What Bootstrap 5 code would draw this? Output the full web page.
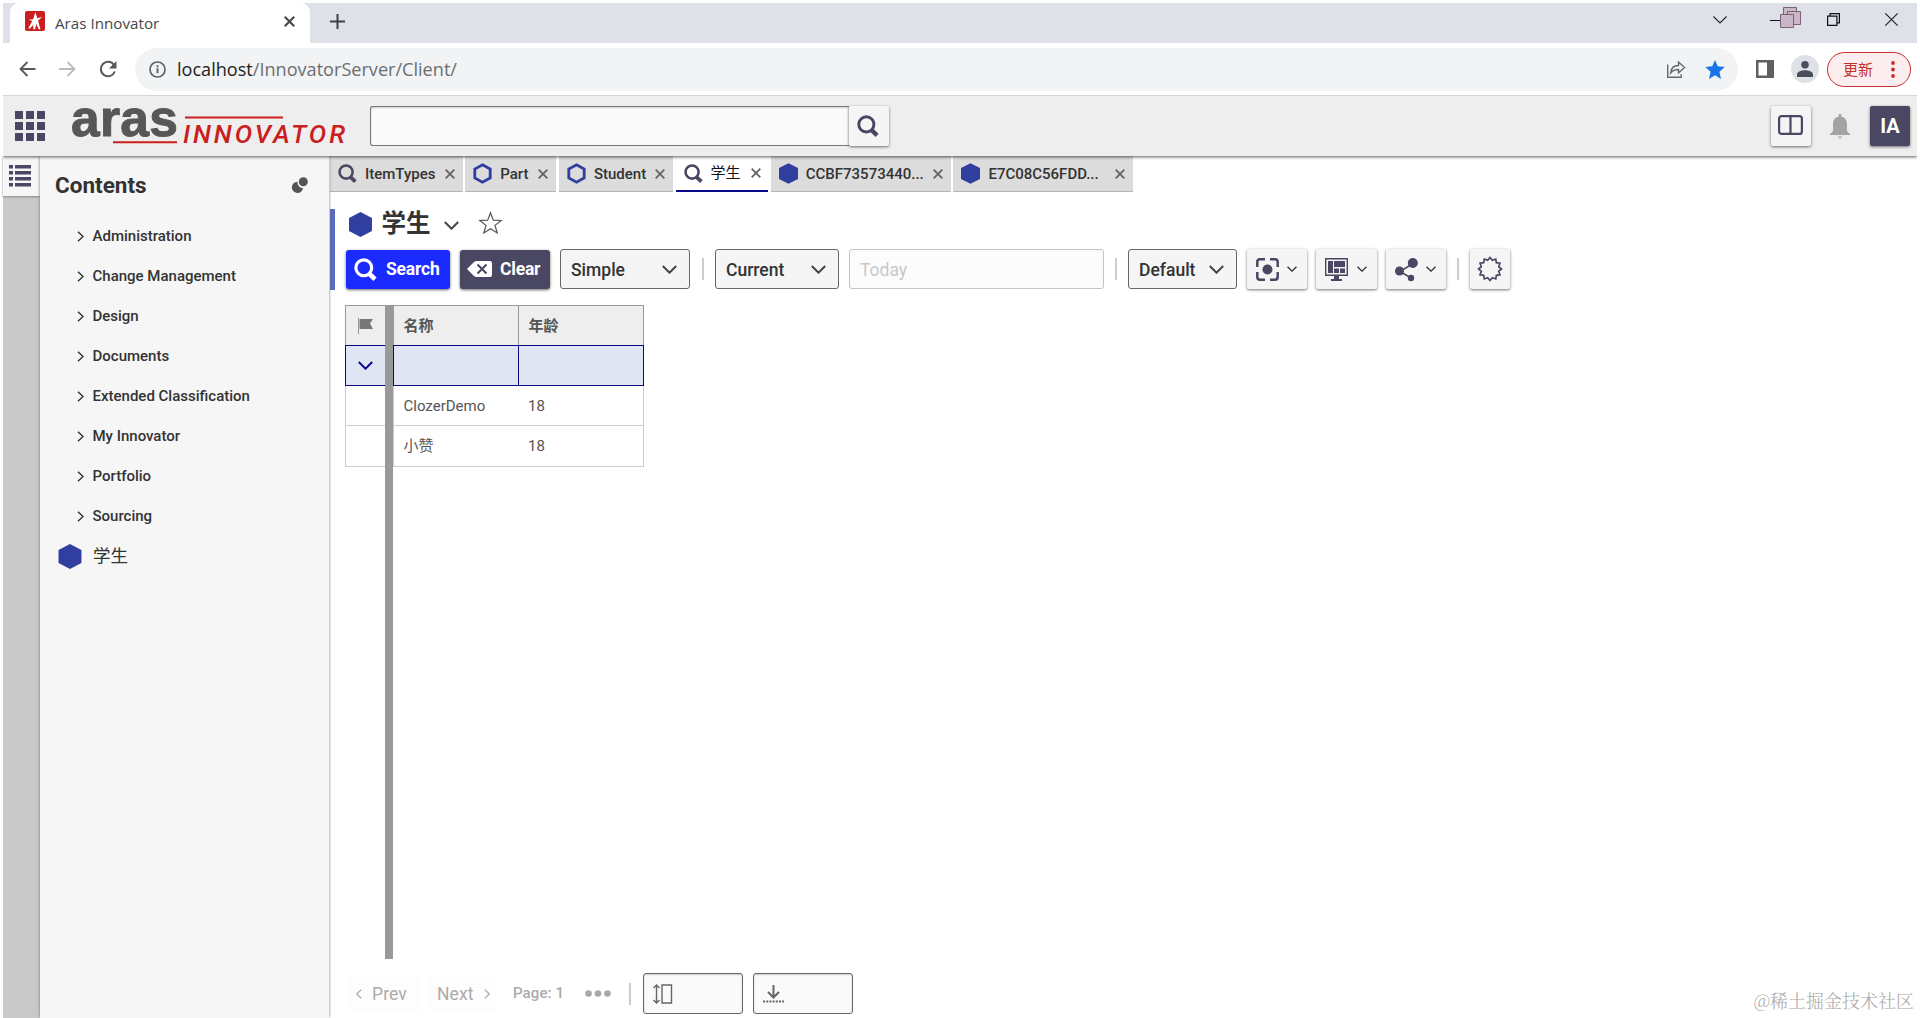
<!DOCTYPE html>
<html lang="en">
<head>
<meta charset="utf-8">
<title>Aras Innovator</title>
<link rel="stylesheet" href="https://cdn.jsdelivr.net/npm/bootstrap@5.3.0/dist/css/bootstrap.min.css">
<script src="https://cdn.jsdelivr.net/npm/bootstrap@5.3.0/dist/js/bootstrap.bundle.min.js"></script>
<style>
:root{--ink:#4a4763;--hex:#303f9f}
body{font-family:Roboto,"Noto Sans CJK SC",sans-serif;font-size:15px;line-height:20px;color:#333;background:#fff;height:1018px;overflow:hidden}
svg{display:block;flex:none;overflow:visible}
.shell{padding:3px 3px 0;height:1018px}
.ui{font-family:"Open Sans","Noto Sans CJK SC",sans-serif}
.tabstrip{height:40px;background:#dee1e8;padding-left:7px}
.browser-tab{width:300px;height:40px;background:#fff;border-radius:9px 9px 0 0;padding:0 15px 4px 15px}
.browser-tab .cap{font-size:15.2px;color:#45474b;margin-left:10px;padding-top:4px}
.plus{margin:0 0 4px 20px}
.win{padding:0 19px 7px 0}
.addr{height:53px;border-bottom:1px solid #d5d6d6;padding:0 6px 0 16px}
.omni{height:43px;margin:5px 0 0 18px;border-radius:22px;background:#f1f3f4;padding:0 13px 0 14px}
.omni .url{font-size:18.1px;color:#6b6e72;margin-left:11px;padding-bottom:2px}
.omni b{font-weight:400;color:#222}
.avatar{width:28px;height:28px;background:#dee1e6}
.update{width:84px;height:35px;border:1.5px solid #c5302c;background:#fceeee;color:#c5302c;padding:0 15px;font-size:15px}
.apphead{height:60px;background:#eee;box-shadow:0 1px 3px rgba(0,0,0,.65);position:relative;z-index:2;padding:0 7px 0 12px;clip-path:inset(0 0 -6px 0)}
.find{width:479px;height:40px;border:1px solid #777;border-right:0;border-radius:3px 0 0 3px;background:#fafafa;box-shadow:inset 0 1px 2px #ccc}
.raised{background:#f5f5f5;border-radius:2px;box-shadow:0 1px 3px rgba(0,0,0,.55)}
.sq{width:40px;height:40px}
.user{background:var(--ink);color:#fff;font-weight:700;font-size:20px}
.rail{width:37px;background:#c9c9c9}
.rail div{height:40px;background:#f6f6f6;box-shadow:0 1px 2px #888;padding-left:6px}
.toc{width:289px;background:#f6f6f6;box-shadow:0 0 3px #777;position:relative;z-index:1;padding:13px 21px 0 15px}
.toc h1{font-size:22.5px;line-height:32px;font-weight:700;margin:0}
.toc ul{margin-top:15px}
.toc li{height:40px;font-weight:500;padding-left:22px}
.toc li svg{margin-right:8.5px}
.toc .own{padding-left:3px;font-weight:400;font-size:17.5px}
.toc .own svg{margin-right:11px}
.doc-tab{height:36px;background:#dcdcdc;border-bottom:1px solid #b5b5b5;margin-right:2.7px;padding:0 8px;font-weight:500}
.doc-tab.on{background:#fff;border-bottom:2px solid #0a0a8a;color:#111;font-weight:400}
.doc-tab .x{margin-left:auto}
.zone{height:81px;margin-top:17px;border-left:5px solid #5c6bc0;padding-left:11px}
.zone h2{font-size:24.5px;line-height:30px;font-weight:700;margin:0;color:#333}
.tools{margin-top:10px;height:40px;font-size:17.5px;font-weight:500}
.act{height:39px;border-radius:3px;color:#fff;font-weight:700;font-size:17.5px;letter-spacing:-.2px;box-shadow:0 1px 3px rgba(0,0,0,.6)}
.pick{height:40px;border:1px solid #666;border-radius:3px;background:#f5f5f5;color:#333;padding:1px 12px 0 10px}
.vr2{width:2px;height:22px;background:#ccc}
.today{width:255px;height:40px;border:1px solid #c4c4c4;border-radius:3px;background:#fcfcfc;color:#c8c8c8;padding:10px 10px 9px;font-weight:400}
.gridzone{height:654px;margin:15px 0 0 15px}
.splitter{width:8px;background:#999}
.cell{height:40.3px;border:1px solid #ccc;border-top:0;padding-left:9.5px;color:#555}
.cell.hd{height:40px;background:#eee;border:1px solid #999;border-bottom:0;font-weight:700}
.cell.cr{height:41px;background:#e0e5f3;border:1px solid #0a0a80}
.c0{width:41px;padding-left:12px!important}.c1{width:126px}.c2{width:126px;margin-left:-1px}
.flat1{border-right:0!important}.flat2{border-left:0!important}
.pager{margin:14px 0 0 18px;height:41px;color:#ababab;font-size:17.5px;letter-spacing:.1px}
.pg{height:35px;background:#fdfdfd}
.box{width:100px;height:41px;border:1px solid #666;border-radius:3px;background:#fafafa;box-shadow:inset 0 1px 2px #ccc;padding-left:9px}
.wmark{right:6px;bottom:6px;font-size:18px;line-height:24px;font-family:"Noto Serif CJK SC","Noto Sans CJK SC",serif;font-weight:300;color:#a9a9a9}
</style>
</head>
<body>
<svg width="0" height="0" class="position-absolute"><defs>
<symbol id="mag" viewBox="0 0 20 20"><circle cx="8.500" cy="8.500" r="6.900" fill="none" stroke="currentColor" stroke-width="2.700"/><path d="M13 13.500l5.300 5" stroke="currentColor" stroke-width="4"/></symbol>
<symbol id="hexf" viewBox="0 0 22 24"><path d="M11 0l11 5.700v12.600L11 24 0 18.300V5.700z" fill="#303f9f"/></symbol>
<symbol id="hexo" viewBox="0 0 20 22"><path d="M10 1.900l8.100 4.400v9.400L10 20.100l-8.100-4.400V6.300z" fill="none" stroke="#303f9f" stroke-width="3"/></symbol>
<symbol id="cross" viewBox="0 0 10 10"><path d="M.7.7l8.600 8.600M9.300.7L.7 9.300" stroke="currentColor" stroke-width="1.900"/></symbol>
<symbol id="down" viewBox="0 0 15 9"><path d="M.8 1l6.700 6.700L14.200 1" fill="none" stroke="currentColor" stroke-width="2"/></symbol>
<symbol id="right" viewBox="0 0 6 10"><path d="M.7.6L5.300 5 .7 9.400" fill="none" stroke="currentColor" stroke-width="1.300"/></symbol>
</defs></svg>
<div class="shell d-flex flex-column">
  <div class="tabstrip ui d-flex align-items-center">
    <div class="browser-tab d-flex align-items-center">
      <svg width="20" height="20" viewBox="0 0 20 20"><rect width="20" height="20" rx="2" fill="#c9201f"/><path d="M10.300 1.300l2.100 5.900 4.700-1.200-4 3.600 2.300 8.700h-1.700L11.300 13l-1.200 5.300H8.300L8.200 14l-3.400 3.600H3.200L7.300 10 3.500 8.800l4.700-.6z" fill="#fff"/></svg>
      <span class="cap">Aras Innovator</span>
      <svg class="ms-auto" width="11" height="11" color="#44474b"><use href="#cross"/></svg>
    </div>
    <svg class="plus" width="15" height="15" viewBox="0 0 15 15" stroke="#3c4043" stroke-width="2"><path d="M7.500 0v15M0 7.500h15"/></svg>
    <div class="win d-flex ms-auto align-items-center">
      <svg width="14" height="8" viewBox="0 0 14 8" fill="none" stroke="#222" stroke-width="1.100"><path d="M.5.5L7 7l6.500-6.500"/></svg>
      <svg width="32" height="22" viewBox="0 0 32 22" style="margin:-6px 25px 0 43px"><path d="M0 14.500h12" stroke="#111" /><g fill="#cbb6c9" stroke="#7d6275"><path d="M13.500 1.500h13v13h-13z"/><path d="M17.500 5.500h13v13h-13z"/><path d="M10.500 8.500h13v13h-13z"/></g></svg>
      <svg width="13" height="13" viewBox="0 0 13 13" fill="none" stroke="#111" stroke-width="1.200"><path d="M.6 3.100h9.300v9.300H.6zM3.100 3V.6h9.300v9.300H10"/></svg>
      <svg width="13" height="13" viewBox="0 0 13 13" stroke="#222" stroke-width="1.200" style="margin-left:45px"><path d="M.3.3l12.400 12.400M12.700.3L.3 12.700"/></svg>
    </div>
  </div>
  <div class="addr ui d-flex align-items-center">
    <svg width="17" height="16" viewBox="0 0 17 16" fill="none" stroke="#55585c" stroke-width="1.800"><path d="M16.500 8H1.500M8.500 1l-7 7 7 7"/></svg>
    <svg width="17" height="16" viewBox="0 0 17 16" fill="none" stroke="#b9bbbd" stroke-width="1.800" style="margin-left:23px"><path d="M0 8h15M8.500 1l7 7-7 7"/></svg>
    <svg width="18" height="17" viewBox="0 0 18 17" style="margin-left:23px"><path d="M15 4a7.200 7.200 0 1 0 .8 6.500" fill="none" stroke="#55585c" stroke-width="2"/><path d="M17.500 0v7.500H10z" fill="#55585c"/></svg>
    <div class="omni d-flex flex-grow-1 align-items-center align-self-start">
      <svg width="17" height="17" viewBox="0 0 17 17"><circle cx="8.500" cy="8.500" r="7.500" fill="none" stroke="#5f6368" stroke-width="1.700"/><path d="M8.500 7.300v5M8.500 4.300v2" stroke="#5f6368" stroke-width="1.900"/></svg>
      <span class="url"><b>localhost</b>/InnovatorServer/Client/</span>
      <svg class="ms-auto" width="18" height="17" viewBox="0 0 18 17" fill="none" stroke="#66696d" stroke-width="1.400"><path d="M.7 3.500v12.800h13.500v-3M3.600 12C4 7 7 4.500 11.500 4.500V1l6 5.500-6 5.500V8.500C8 8.500 5.500 9.500 3.600 12z"/></svg>
      <svg width="20" height="19" viewBox="0 0 20 19" style="margin-left:20px"><path d="M10 0l2.700 6.300 7 .8-5.300 4.600L16 19l-6-3.700L4 19l1.600-7.300L.3 7.100l7-.8z" fill="#1a73e8"/></svg>
    </div>
    <svg width="18" height="18" viewBox="0 0 18 18" style="margin-left:18px"><path d="M0 0h18v18H0zM2.500 2.500v13h8.500v-13z" fill="#5f6062" fill-rule="evenodd"/></svg>
    <div class="avatar rounded-circle d-flex justify-content-center align-items-center" style="margin-left:17px"><svg width="16" height="16" viewBox="0 0 16 16" fill="#4a4e5c"><circle cx="8" cy="3.800" r="3.800"/><path d="M0 16v-2.500C0 10.500 5 9.300 8 9.300s8 1.200 8 4.200V16z"/></svg></div>
    <div class="update rounded-pill d-flex align-items-center justify-content-between" style="margin-left:8px"><span>更新</span><svg width="4" height="17" viewBox="0 0 4 17" fill="#c5302c"><circle cx="2" cy="2" r="1.900"/><circle cx="2" cy="8.500" r="1.900"/><circle cx="2" cy="15" r="1.900"/></svg></div>
  </div>
  <header class="apphead d-flex align-items-center">
    <svg width="30" height="30" viewBox="0 0 30 30" fill="#4a4763"><path d="M0 0h8v8H0zM11 0h8v8h-8zM22 0h8v8h-8zM0 11h8v8H0zM11 11h8v8h-8zM22 11h8v8h-8zM0 22h8v8H0zM11 22h8v8h-8zM22 22h8v8h-8z"/></svg>
    <svg width="325" height="60" viewBox="45 0 325 60">
      <text x="71" y="40" font-family="Liberation Sans" font-weight="700" font-size="51.500" fill="#575757" textLength="107" stroke="#575757" stroke-width="1">aras</text>
      <path d="M113 46.200h64M185 21.500h98" stroke="#c9201f" stroke-width="2"/>
      <text x="183" y="46.700" font-family="Roboto" font-style="italic" font-weight="500" font-size="26" fill="#c9201f" textLength="162">INNOVATOR</text>
    </svg>
    <div class="find"></div>
    <div class="raised sq d-flex align-items-center justify-content-center" style="color:#4a4763"><svg width="22" height="22" style="margin:0 3px 1px 0"><use href="#mag"/></svg></div>
    <div class="raised sq ms-auto d-flex align-items-center justify-content-center"><svg width="25" height="20" viewBox="0 0 25 20" fill="none" stroke="#4a4763" stroke-width="2.200" style="margin:-3px 2px 0 0"><rect x="1.100" y="1.100" width="22.800" height="17.800" rx="2.500"/><path d="M12.500 1v18"/></svg></div>
    <svg width="20" height="25" viewBox="0 0 20 25" fill="#a3a3a3" style="margin:0 20px 0 19px"><path d="M8.800 2.500V0h2.400v2.500c4 .8 5.800 4 5.800 7.500v7l3 3.200V21H0v-.8L3 17v-7c0-3.500 1.800-6.700 5.800-7.500zM7.800 22.500h4.400L10 24.800z"/></svg>
    <div class="raised sq user d-flex align-items-center justify-content-center">IA</div>
  </header>
  <div class="d-flex flex-grow-1">
    <nav class="rail"><div class="d-flex align-items-center"><svg width="22" height="22" viewBox="0 0 22 22" fill="#4a4763"><path d="M0 0h4v3.500H0zM6 0h16v3.500H6zM0 6h4v3.500H0zM6 6h16v3.500H6zM0 12h4v3.500H0zM6 12h16v3.500H6zM0 18h4v3.500H0zM6 18h16v3.500H6z"/></svg></div></nav>
    <aside class="toc">
      <div class="d-flex align-items-center justify-content-between"><h1>Contents</h1><svg width="16" height="16" viewBox="0 0 16 16" fill="#555"><path d="M5.500 4.800A5.600 5.600 0 1 0 11 11 5.500 5.500 0 0 1 5.500 4.800z"/><circle cx="11.300" cy="4.700" r="4.500"/></svg></div>
      <ul class="list-unstyled mb-0">
        <li class="d-flex align-items-center"><svg width="7" height="11"><use href="#right"/></svg>Administration</li>
        <li class="d-flex align-items-center"><svg width="7" height="11"><use href="#right"/></svg>Change Management</li>
        <li class="d-flex align-items-center"><svg width="7" height="11"><use href="#right"/></svg>Design</li>
        <li class="d-flex align-items-center"><svg width="7" height="11"><use href="#right"/></svg>Documents</li>
        <li class="d-flex align-items-center"><svg width="7" height="11"><use href="#right"/></svg>Extended Classification</li>
        <li class="d-flex align-items-center"><svg width="7" height="11"><use href="#right"/></svg>My Innovator</li>
        <li class="d-flex align-items-center"><svg width="7" height="11"><use href="#right"/></svg>Portfolio</li>
        <li class="d-flex align-items-center"><svg width="7" height="11"><use href="#right"/></svg>Sourcing</li>
        <li class="own d-flex align-items-center"><svg width="24" height="25"><use href="#hexf"/></svg>学生</li>
      </ul>
    </aside>
    <main class="flex-grow-1 d-flex flex-column ms-0" style="padding-left:1px">
      <div class="d-flex">
        <div class="doc-tab d-flex align-items-center" style="width:132.500px"><svg width="19" height="19" color="#4a4763"><use href="#mag"/></svg><span style="margin-left:8px">ItemTypes</span><svg class="x" width="10" height="10" color="#666"><use href="#cross"/></svg></div>
        <div class="doc-tab d-flex align-items-center" style="width:91px"><svg width="19" height="23"><use href="#hexo"/></svg><span style="margin-left:8px">Part</span><svg class="x" width="10" height="10" color="#666"><use href="#cross"/></svg></div>
        <div class="doc-tab d-flex align-items-center" style="width:114px"><svg width="19" height="23"><use href="#hexo"/></svg><span style="margin-left:8px">Student</span><svg class="x" width="10" height="10" color="#666"><use href="#cross"/></svg></div>
        <div class="doc-tab on d-flex align-items-center" style="width:92.500px"><svg width="19" height="19" color="#4a4763"><use href="#mag"/></svg><span style="margin-left:8px">学生</span><svg class="x" width="10" height="10" color="#666" style="margin-right:-1px"><use href="#cross"/></svg></div>
        <div class="doc-tab d-flex align-items-center" style="width:180px"><svg width="19" height="21"><use href="#hexf"/></svg><span style="margin-left:8px">CCBF73573440...</span><svg class="x" width="10" height="10" color="#666"><use href="#cross"/></svg></div>
        <div class="doc-tab d-flex align-items-center" style="width:180px"><svg width="19" height="21"><use href="#hexf"/></svg><span style="margin-left:8px">E7C08C56FDD...</span><svg class="x" width="10" height="10" color="#666"><use href="#cross"/></svg></div>
      </div>
      <section class="zone">
        <div class="d-flex align-items-center"><svg width="23" height="25" style="margin-left:3px"><use href="#hexf"/></svg><h2 style="margin-left:9.500px">学生</h2><svg width="15" height="9" color="#444" style="margin:2px 0 0 13px"><use href="#down"/></svg>
          <svg width="23" height="22" viewBox="0 0 23 22" style="margin:-2px 0 0 20.500px"><path d="M11.500.7l2.800 7.400 7.900.4-6.200 4.900 2.200 7.600-6.700-4.300L4.800 21 7 13.400.8 8.500l7.900-.4z" fill="none" stroke="#555" stroke-width="1.200"/></svg></div>
        <div class="tools d-flex align-items-center">
          <div class="act d-flex align-items-center" style="width:104px;background:#1b2bff;padding-left:8px"><svg width="23" height="23" style="margin-right:9px"><use href="#mag"/></svg>Search</div>
          <div class="act d-flex align-items-center" style="width:90px;background:#4a4763;margin-left:10px;padding-left:7px"><svg width="25" height="16" viewBox="0 0 25 16" style="margin-right:8px"><path d="M0 8l7-7q1-1 2.500-1H23q2 0 2 2v12q0 2-2 2H9.500Q8 16 7 15z" fill="#fff"/><path d="M10.500 3.500l9 9m0-9l-9 9" stroke="#4a4763" stroke-width="2"/></svg>Clear</div>
          <div class="pick d-flex align-items-center justify-content-between" style="width:130px;margin-left:10px">Simple<svg width="15" height="9" color="#444"><use href="#down"/></svg></div>
          <div class="vr2" style="margin:0 11px 0 12px"></div>
          <div class="pick d-flex align-items-center justify-content-between" style="width:124px">Current<svg width="15" height="9" color="#444"><use href="#down"/></svg></div>
          <div class="today d-flex align-items-center" style="margin-left:10px">Today</div>
          <div class="vr2" style="margin:0 11px"></div>
          <div class="pick d-flex align-items-center justify-content-between" style="width:109px">Default<svg width="15" height="9" color="#444"><use href="#down"/></svg></div>
          <div class="raised sq d-flex align-items-center justify-content-between" style="width:60px;margin-left:10px;padding:0 10.500px 0 8.500px"><svg width="23" height="23" viewBox="0 0 23 23" fill="none" stroke="#4a4763" stroke-width="2.500"><path d="M1.300 9V4q0-2.700 2.700-2.700h5M14 1.300h5q2.700 0 2.700 2.700v5M21.700 14v5q0 2.700-2.700 2.700h-5M9 21.700H4q-2.700 0-2.700-2.700v-5"/><circle cx="11.500" cy="11.500" r="5" fill="#4a4763" stroke="none"/></svg><svg width="10" height="6" color="#333"><use href="#down"/></svg></div>
          <div class="raised sq d-flex align-items-center justify-content-between" style="width:61px;margin-left:9px;padding:0 10.500px 0 8.500px"><svg width="23" height="23" viewBox="0 0 23 23"><path d="M.7.7h21.600v16.600H.7z" fill="#f5f5f5" stroke="#4a4763" stroke-width="1.400"/><path d="M3 3h5v12H3zM9 3h11v6H9zM9 10.500h5V15H9zM15 10.500h5V15h-5zM9 18h5v3h3v2H6v-2h3z" fill="#4a4763"/></svg><svg width="10" height="6" color="#333"><use href="#down"/></svg></div>
          <div class="raised sq d-flex align-items-center justify-content-between" style="width:60px;margin-left:9px;padding:0 10.500px 0 8.500px"><svg width="23" height="23" viewBox="0 0 23 23" fill="#4a4763"><path d="M16 20L5 13.500 18 5.500" fill="none" stroke="#4a4763" stroke-width="1.500"/><circle cx="4.500" cy="13" r="4.500"/><circle cx="17.800" cy="5" r="5"/><circle cx="16" cy="20" r="3.200"/></svg><svg width="10" height="6" color="#333"><use href="#down"/></svg></div>
          <div class="vr2" style="margin:0 11px"></div>
          <div class="raised sq d-flex align-items-center justify-content-center"><svg width="24" height="24" viewBox="-12 -12 24 24" style="margin-right:1px"><path id="burst" fill="none" stroke="#4a4763" stroke-width="1.700"/></svg></div>
        </div>
      </section>
      <section class="gridzone d-flex">
        <div class="c0w">
          <div class="cell hd c0 d-flex align-items-center"><svg width="15" height="16" viewBox="0 0 15 16"><path d="M.5 0v16" stroke="#999"/><path d="M1.500 1H15l-3 4.500 3 5.500H1.500z" fill="#777"/></svg></div>
          <div class="cell cr c0 d-flex align-items-center"><svg width="15" height="9" color="#0a0a9a"><use href="#down"/></svg></div>
          <div class="cell c0 flat1"></div><div class="cell c0 flat1"></div>
        </div>
        <div class="splitter" style="margin-left:-1px"></div>
        <div>
          <div class="d-flex"><div class="cell hd c1 d-flex align-items-center">名称</div><div class="cell hd c2 d-flex align-items-center">年龄</div></div>
          <div class="d-flex"><div class="cell cr c1"></div><div class="cell cr c2"></div></div>
          <div class="d-flex"><div class="cell c1 flat1 d-flex align-items-center">ClozerDemo</div><div class="cell c2 flat2 d-flex align-items-center ps-2 ms-0" style="width:125px"><span style="padding-left:1px">18</span></div></div>
          <div class="d-flex"><div class="cell c1 flat1 d-flex align-items-center">小赞</div><div class="cell c2 flat2 d-flex align-items-center ps-2 ms-0" style="width:125px"><span style="padding-left:1px">18</span></div></div>
        </div>
      </section>
      <footer class="pager d-flex align-items-center">
        <div class="pg d-flex align-items-center" style="width:73px;padding-left:8px"><svg width="6" height="10" style="transform:scaleX(-1);margin-right:10px"><use href="#right"/></svg>Prev</div>
        <div class="pg d-flex align-items-center" style="width:68px;margin-left:7px;padding-left:9px">Next<svg width="6" height="10" style="margin-left:10px"><use href="#right"/></svg></div>
        <span style="width:72px;margin-left:17px;font-size:15px;font-weight:500;padding-bottom:2px">Page: 1</span>
        <svg width="26" height="7" viewBox="0 0 26 7" fill="#a8a8a8"><circle cx="3.500" cy="3.500" r="3.300"/><circle cx="13" cy="3.500" r="3.300"/><circle cx="22.500" cy="3.500" r="3.300"/></svg>
        <div class="vr2" style="margin:0 12px 0 18px"></div>
        <div class="box d-flex align-items-center"><svg width="20" height="20" viewBox="0 0 20 20" fill="none" stroke="#666" stroke-width="1.400"><path d="M3.500 1v18M.5 4l3-3 3 3M.5 16l3 3 3-3"/><path d="M9 1h9.500v18H9z"/></svg></div>
        <div class="box d-flex align-items-center" style="margin-left:10px"><svg width="21" height="18" viewBox="0 0 21 18" fill="none" stroke="#666" stroke-width="2"><path d="M10.500 0v12M5 7l5.500 5.500L16 7"/><path d="M0 16.500h21" stroke-dasharray="2 1.200"/></svg></div>
      </footer>
    </main>
  </div>
</div>
<div class="wmark position-absolute">@稀土掘金技术社区</div>
<script>
// Twelve-pointed badge outline
let d='';for(let i=0;i<24;i++){const r=i%2?9:11.500,a=Math.PI*i/12-Math.PI/2;d+=(i?'L':'M')+(r*Math.cos(a)).toFixed(2)+' '+(r*Math.sin(a)).toFixed(2)}
document.getElementById('burst').setAttribute('d',d+'z');
</script>
</body>
</html>
